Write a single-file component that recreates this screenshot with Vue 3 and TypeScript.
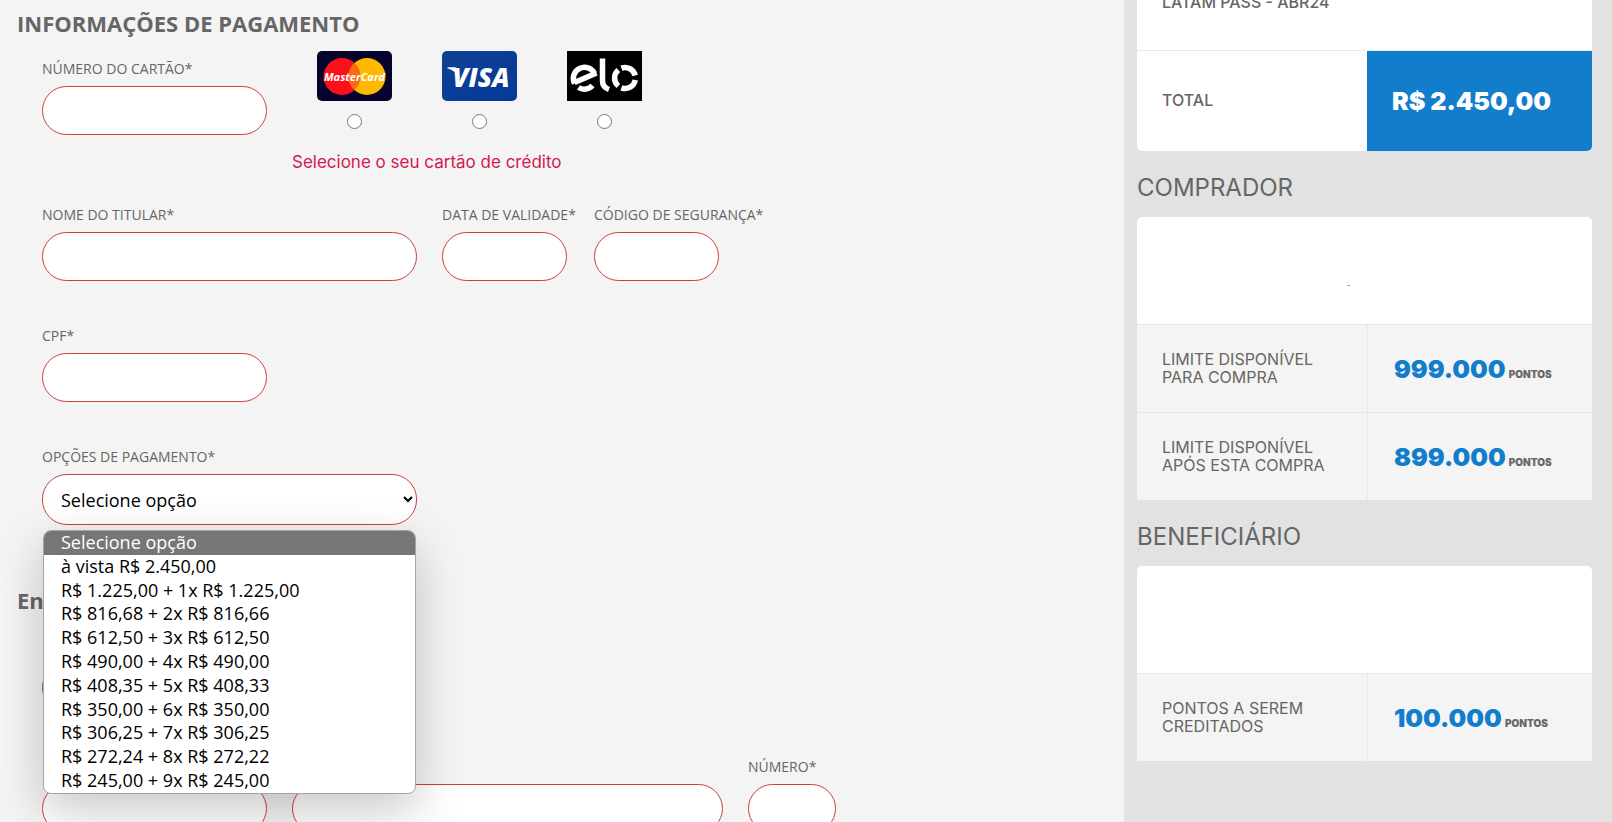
<script setup lang="ts">
import { ref } from 'vue'

interface LimitRow {
  label: string[]
  value: string
}

const brands = ['mastercard', 'visa', 'elo'] as const
const brandNames: Record<(typeof brands)[number], string> = {
  mastercard: 'MasterCard',
  visa: 'Visa',
  elo: 'Elo',
}
const brand = ref('')

const options: string[] = [
  'Selecione opção',
  'à vista R$ 2.450,00',
  'R$ 1.225,00 + 1x R$ 1.225,00',
  'R$ 816,68 + 2x R$ 816,66',
  'R$ 612,50 + 3x R$ 612,50',
  'R$ 490,00 + 4x R$ 490,00',
  'R$ 408,35 + 5x R$ 408,33',
  'R$ 350,00 + 6x R$ 350,00',
  'R$ 306,25 + 7x R$ 306,25',
  'R$ 272,24 + 8x R$ 272,22',
  'R$ 245,00 + 9x R$ 245,00',
]
const selected = ref(options[0])

const buyerRows: LimitRow[] = [
  { label: ['LIMITE DISPONÍVEL', 'PARA COMPRA'], value: '999.000' },
  { label: ['LIMITE DISPONÍVEL', 'APÓS ESTA COMPRA'], value: '899.000' },
]
const receiverRows: LimitRow[] = [
  { label: ['PONTOS A SEREM', 'CREDITADOS'], value: '100.000' },
]
</script>

<template>
  <div class="page">
    <main class="main">
      <h1 class="title">INFORMAÇÕES DE PAGAMENTO</h1>
      <form class="form" @submit.prevent>
        <div class="row row-card">
          <div class="field w-225">
            <label for="card">NÚMERO DO CARTÃO*</label>
            <input id="card" type="text" />
          </div>
          <div class="brands" role="radiogroup" aria-label="Bandeira do cartão">
            <div class="brand-list">
              <label v-for="b in brands" :key="b" class="brand">
                <svg v-if="b === 'mastercard'" viewBox="0 0 75 50" class="logo">
                  <rect width="75" height="50" rx="5" fill="#04042c" />
                  <circle cx="25" cy="25.500" r="18.500" fill="#fb0f1b" />
                  <circle cx="50" cy="25.500" r="18.500" fill="#fdb900" />
                  <path d="M37.500 11.900a18.500 18.500 0 0 1 0 27.200a18.500 18.500 0 0 1 0-27.200z" fill="#f96a13" />
                  <text x="37.500" y="30" text-anchor="middle" class="mc-text">MasterCard</text>
                </svg>
                <svg v-else-if="b === 'visa'" viewBox="0 0 75 50" class="logo">
                  <defs>
                    <linearGradient id="visaBg" x1="0" y1="0" x2="1" y2="1">
                      <stop offset="0" stop-color="#0f4192" />
                      <stop offset="1" stop-color="#05399a" />
                    </linearGradient>
                  </defs>
                  <rect width="75" height="50" rx="5" fill="url(#visaBg)" />
                  <path d="M5.500 16.300h7.200q2.200 0 2.800 2.200l2.600 10q-3.600-8.700-12.600-11.200z" fill="#fff" />
                  <text x="39" y="35.500" text-anchor="middle" class="visa-text">VISA</text>
                </svg>
                <svg v-else viewBox="0 0 75 50" class="logo">
                  <rect width="75" height="50" fill="#000" />
                  <g fill="none" stroke="#fff" stroke-width="5.500">
                    <path d="M7.500 32.500A11 11 0 1 1 27.500 22.500" />
                    <path d="M7.500 31.500L29.500 22" />
                    <path d="M11.500 36.500A11 11 0 0 0 25.500 34.500" />
                    <path d="M35.500 7.500V30Q35.500 36 42 38.500" />
                    <path d="M51.300 35A10.500 10.500 0 0 1 51.300 19" />
                    <path d="M54.400 17.100A10.500 10.500 0 0 1 68.200 24.500" />
                    <path d="M68.300 29A10.500 10.500 0 0 1 54.400 36.900" />
                  </g>
                </svg>
                <input v-model="brand" type="radio" name="brand" :value="b" :aria-label="brandNames[b]" />
              </label>
            </div>
            <p class="error">Selecione o seu cartão de crédito</p>
          </div>
        </div>

        <div class="row">
          <div class="field w-375">
            <label for="holder">NOME DO TITULAR*</label>
            <input id="holder" type="text" />
          </div>
          <div class="field w-125">
            <label for="expiry">DATA DE VALIDADE*</label>
            <input id="expiry" type="text" />
          </div>
          <div class="field w-125 field-cvv">
            <label for="cvv">CÓDIGO DE SEGURANÇA*</label>
            <input id="cvv" type="text" />
          </div>
        </div>

        <div class="row">
          <div class="field w-225">
            <label for="cpf">CPF*</label>
            <input id="cpf" type="text" />
          </div>
        </div>

        <div class="row">
          <div class="field w-375">
            <label for="plan">OPÇÕES DE PAGAMENTO*</label>
            <select id="plan" v-model="selected">
              <option v-for="o in options" :key="o">{{ o }}</option>
            </select>
            <ul class="menu" role="listbox" aria-label="Opções de pagamento">
              <li
                v-for="o in options"
                :key="o"
                role="option"
                :aria-selected="o === selected"
                :class="{ active: o === selected }"
                @click="selected = o"
              >
                {{ o }}
              </li>
            </ul>
          </div>
        </div>

        <h2 class="title title-address">Endereço</h2>

        <div class="row row-address">
          <div class="field w-225">
            <input type="text" aria-label="CEP" />
          </div>
        </div>

        <div class="row row-address">
          <div class="field w-225">
            <input type="text" aria-label="Tipo" />
          </div>
          <div class="field w-431">
            <input type="text" aria-label="Endereço" />
          </div>
          <div class="field w-88">
            <label for="number">NÚMERO*</label>
            <input id="number" type="text" />
          </div>
        </div>
      </form>
    </main>

    <aside class="side">
      <table class="card card-order">
        <colgroup><col class="col-label" /><col /></colgroup>
        <tbody>
          <tr class="item">
            <th scope="row">LATAM PASS - ABR24</th>
            <td>R$ 2.450,00</td>
          </tr>
          <tr class="total">
            <th scope="row">TOTAL</th>
            <td>R$ 2.450,00</td>
          </tr>
        </tbody>
      </table>

      <h2 class="side-title">COMPRADOR</h2>
      <table class="card">
        <colgroup><col class="col-label" /><col /></colgroup>
        <tbody>
          <tr class="person">
            <td colspan="2"><span class="mark"></span></td>
          </tr>
          <tr v-for="r in buyerRows" :key="r.value" class="limit">
            <th scope="row">{{ r.label[0] }}<br />{{ r.label[1] }}</th>
            <td><strong>{{ r.value }}</strong><small>PONTOS</small></td>
          </tr>
        </tbody>
      </table>

      <h2 class="side-title">BENEFICIÁRIO</h2>
      <table class="card">
        <colgroup><col class="col-label" /><col /></colgroup>
        <tbody>
          <tr class="person">
            <td colspan="2"></td>
          </tr>
          <tr v-for="r in receiverRows" :key="r.value" class="limit">
            <th scope="row">{{ r.label[0] }}<br />{{ r.label[1] }}</th>
            <td><strong>{{ r.value }}</strong><small>PONTOS</small></td>
          </tr>
        </tbody>
      </table>
    </aside>
  </div>
</template>

<style>
html {
  scrollbar-width: none;
}
body {
  margin: 0;
  background: #f4f4f4;
}
</style>

<style scoped>
* {
  box-sizing: border-box;
}
.page {
  display: flex;
  min-height: 100vh;
  overflow: hidden;
  background: #f4f4f4;
  color: #666;
  font-family: 'Trebuchet MS', 'Open Sans', sans-serif;
}
.main {
  flex: 1;
  min-width: 0;
  padding: 7px 17px 0;
}
.title {
  margin: 0;
  font-size: 22px;
  line-height: 32px;
  font-weight: 700;
}
.form {
  padding-left: 25px;
}
.row {
  display: flex;
  gap: 25px;
  margin-bottom: 45px;
}
.row-card {
  gap: 50px;
  margin-top: 12px;
  margin-bottom: 31px;
  padding-top: 8px;
}
.row-address {
  align-items: flex-end;
  min-height: 76px;
}
.row-address:last-child {
  margin-bottom: 0;
}
.field {
  position: relative;
  display: flex;
  flex-direction: column;
}
.field label {
  margin-bottom: 7px;
  font-size: 14px;
  line-height: 20px;
  white-space: nowrap;
}
.field input,
.field select {
  width: 100%;
  height: 49px;
  border: 1px solid #c8403f;
  border-radius: 25px;
  background: #fff;
  padding: 0 16px;
  font: 18px 'Trebuchet MS', 'Open Sans', sans-serif;
  color: #000;
  outline: none;
}
.field select {
  height: 51px;
  padding: 0 0 0 14px;
}
.field-cvv {
  margin-left: 2px;
}
.w-88 { width: 88px; }
.w-125 { width: 125px; }
.w-225 { width: 225px; }
.w-375 { width: 375px; }
.w-431 { width: 431px; }

.brands {
  margin: -8px 0 0 -25px;
}
.brand-list {
  display: flex;
  gap: 50px;
  padding-left: 25px;
}
.brand {
  display: flex;
  flex-direction: column;
  align-items: center;
}
.brand input {
  width: 15px;
  height: 15px;
  margin: 13px 0 0;
}
.logo {
  display: block;
  width: 75px;
  height: 50px;
}
.mc-text {
  font: italic 700 11px 'Open Sans', sans-serif;
  fill: #fff;
}
.visa-text {
  font: italic 800 26px 'Open Sans', sans-serif;
  fill: #fff;
}
.error {
  margin: 21px 0 0;
  font: 17px/24px Inter, sans-serif;
  color: #d3174f;
}

.menu {
  position: absolute;
  top: 83px;
  left: 1px;
  right: 1px;
  z-index: 2;
  display: flex;
  flex-direction: column;
  height: 264px;
  margin: 0;
  padding: 0;
  overflow: hidden;
  list-style: none;
  background: #fff;
  border: 1px solid #a5a5a5;
  border-radius: 8px;
  box-shadow: 0 16px 48px rgba(0, 0, 0, 0.22);
  font-size: 18px;
  color: #000;
}
.menu li {
  display: flex;
  flex: 1;
  align-items: center;
  min-height: 0;
  padding: 0 0 2px 17px;
  line-height: 20px;
}
.menu .active {
  background: #767676;
  color: #fff;
}
.title-address {
  margin: 59px 0 20px -25px;
}

.side {
  flex: none;
  width: 488px;
  padding: 0 20px 60px 13px;
  background: #e2e2e2;
  font-family: Inter, sans-serif;
}
.card {
  width: 100%;
  border-spacing: 0;
  table-layout: fixed;
  overflow: hidden;
  border-radius: 5px 5px 0 0;
  background: #fff;
}
.card-order {
  margin-top: -44px;
  border-radius: 0 0 5px 5px;
}
.col-label {
  width: 230px;
}
.card th {
  padding: 0 0 2px 25px;
  text-align: left;
  font-size: 16px;
  line-height: 18px;
  font-weight: 400;
}
.card td {
  padding: 0;
}
.item th,
.item td {
  height: 95px;
  border-bottom: 1px solid #e8e8e8;
}
.card .item th,
.card .total th {
  font-weight: 500;
}
.card .item td {
  padding: 0 0 26px 86px;
  font-size: 15px;
  font-weight: 700;
}
.total th,
.total td {
  height: 100px;
}
.card .total td {
  padding-left: 25px;
  background: #127ecb;
  color: #fff;
  font-size: 25px;
  font-weight: 900;
}
.side-title {
  margin: 0;
  padding: 21px 0 13px;
  font-size: 24px;
  line-height: 32px;
  font-weight: 400;
}
.person td {
  height: 107px;
  vertical-align: top;
}
.mark {
  display: block;
  width: 3px;
  height: 1px;
  margin: 68px 0 0 210px;
  background: #aaa;
}
.limit th,
.limit td {
  height: 88px;
  border-top: 1px solid #e8e8e8;
  background: #f4f4f4;
}
.card .limit td {
  padding-left: 26px;
  border-left: 1px solid #e8e8e8;
  white-space: nowrap;
}
.limit strong {
  font-size: 25px;
  font-weight: 900;
  color: #127ecb;
}
.limit small {
  margin-left: 3px;
  font-size: 10px;
  font-weight: 900;
}
</style>
